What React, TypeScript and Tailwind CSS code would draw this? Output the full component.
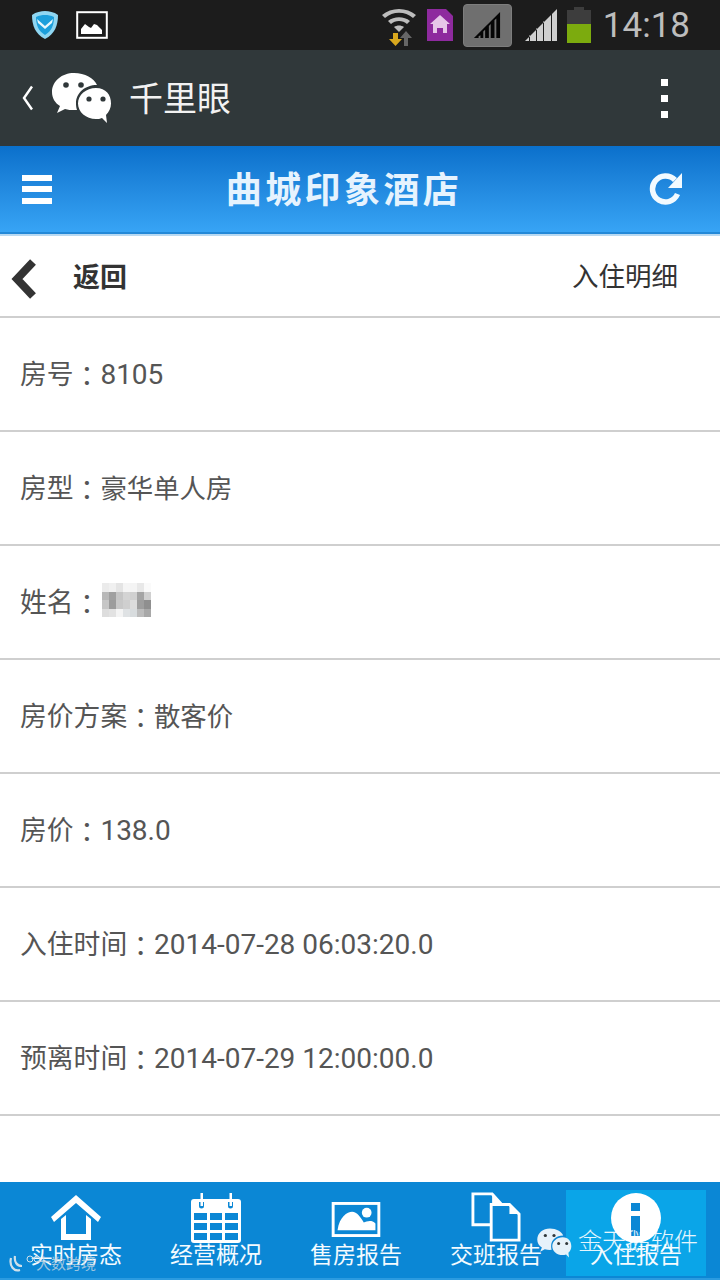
import React from "react";

const font = { fontFamily: '"Roboto","Noto Sans CJK SC",sans-serif' };
const colonFont = { fontFamily: '"Noto Sans CJK TC",sans-serif' };

function WeChat({ className }: { className?: string }) {
  return (
    <svg viewBox="0 0 60 52" className={className}>
      <path d="M23 1C11 1 1 9 1 20c0 6 3 11 8 14l-3 7 8-4c3 1 6 1 9 1 1 0 2 0 3-.1C25 35 25 33 25 31c0-10 9-18 21-18-3-7-12-12-23-12z" fill="currentColor" />
      <path d="M45 16c-10 0-18 7-18 15.500S35 47 45 47c2 0 4 0 6-1l5 5-1-8c3-3 5-7 5-11.500C60 23 55 16 45 16z" fill="currentColor" />
      <circle cx="15" cy="13" r="2.800" fill="#30383a" />
      <circle cx="30" cy="13" r="2.800" fill="#30383a" />
      <circle cx="38" cy="27" r="2.600" fill="#30383a" />
      <circle cx="52" cy="27" r="2.600" fill="#30383a" />
    </svg>
  );
}

function StatusBar() {
  return (
    <div className="h-[50px] bg-[#1c1c1c] flex items-center pl-[31px] pr-[30px]">
      <svg viewBox="0 0 28 30" className="w-[28px] h-[30px]">
        <path d="M14 1c4 0 9 1 13 4 0 10-3 19-13 24C4 24 1 15 1 5c4-3 9-4 13-4z" fill="#8fd6f2" />
        <path d="M14 5c3 0 6 .5 9 2 0 7-2 14-9 18C7 21 5 14 5 7c3-1.500 6-2 9-2z" fill="#1b9fdc" />
        <path d="M6 9l8 7 8-7-1 4-7 6-7-6z" fill="#e6f7fd" />
      </svg>
      <svg viewBox="0 0 32 28" className="w-[32px] h-[28px] ml-[17px]">
        <rect x="1.200" y="1.200" width="29.600" height="25.600" fill="none" stroke="#fff" strokeWidth="2" />
        <path d="M5 23v-5l4-5 4 3 2 1 3-4 3 1 3 3 2 2v4z" fill="#fff" />
      </svg>
      <div className="flex-1" />
      <svg viewBox="0 0 36 40" className="w-[36px] h-[40px] mt-[1px]">
        <path d="M1 9C10 1 26 1 35 9l-3 3C24 5 12 5 4 12z" fill="#bdbdbd" />
        <path d="M7 15c6-5 16-5 22 0l-3 3c-4-4-12-4-16 0z" fill="#bdbdbd" />
        <path d="M13 21c3-2 7-2 10 0l-5 5z" fill="#bdbdbd" />
        <path d="M12 27h5v6h4l-6.500 7L8 33h4z" fill="#d9a81e" />
        <path d="M25 25l6 7h-4v8h-4v-8h-4z" fill="#666" />
      </svg>
      <svg viewBox="0 0 28 34" className="w-[28px] h-[34px] ml-[9px]">
        <path d="M1 1h19l7 7v25H1z" fill="#8e2a9e" />
        <path d="M14 7l10 9h-3v9h-4v-5h-6v5H7v-9H4z" fill="#e6c6e8" />
      </svg>
      <div className="w-[49px] h-[43px] ml-[9px] rounded-[4px] bg-[#6f6f6f] border border-[#7d7d7d] flex items-center justify-center">
        <svg viewBox="0 0 30 30" className="w-[30px] h-[28px]">
          <path d="M1 29L29 1v28h-4V8l-2 2v19h-4V14l-2 2v13h-4V20l-2 2v7H8v-3l-2 1v2z" fill="#050505" />
        </svg>
      </div>
      <svg viewBox="0 0 34 34" className="w-[34px] h-[34px] ml-[12px]">
        <path d="M1 33L33 1v32h-5V6l-1 1v26h-7V13l-1 1v19h-6V20l-1 1v12H6v-6l-1 1v5z" fill="#cfcfcf" />
      </svg>
      <div className="w-[24px] h-[36px] ml-[9px] flex flex-col items-center">
        <div className="w-[10px] h-[3px] bg-[#3d3d3d]" />
        <div className="w-full h-[14px] bg-[#3d3d3d]" />
        <div className="w-full h-[19px] bg-[#7cab0e]" />
      </div>
      <span className="ml-[12px] text-[35px] leading-none text-[#bdbdbd]" style={font}>14:18</span>
    </div>
  );
}

function AppBar() {
  return (
    <div className="h-[96px] bg-[#30383a] flex items-center pl-[22px] pr-[52px] text-white">
      <svg viewBox="0 0 12 26" className="w-[12px] h-[26px]">
        <path d="M10 1.500L2 13l8 11.500" fill="none" stroke="#fff" strokeWidth="2.400" />
      </svg>
      <WeChat className="w-[60px] h-[52px] ml-[17px] text-white" />
      <span className="ml-[18px] mt-[2px] text-[34px] leading-none text-[#f2f2f2]" style={font}>千里眼</span>
      <div className="flex-1" />
      <div className="flex flex-col gap-[9px]">
        <div className="w-[7px] h-[7px] bg-white" />
        <div className="w-[7px] h-[7px] bg-white" />
        <div className="w-[7px] h-[7px] bg-white" />
      </div>
    </div>
  );
}

function Header() {
  return (
    <div className="h-[88px] bg-gradient-to-b from-[#0a70cb] to-[#37a4f5] border-b-2 border-[#2389d8] flex items-center justify-between pl-[22px] pr-[37px]">
      <div className="flex flex-col gap-[5.500px] w-[30px]">
        <div className="h-[6px] bg-white" />
        <div className="h-[6px] bg-white" />
        <div className="h-[6px] bg-white" />
      </div>
      <span className="text-[36px] font-bold leading-none mt-[3px] text-[#e6f3fe] tracking-[3.400px] mr-[13px]" style={font}>曲城印象酒店</span>
      <svg viewBox="0 0 34 34" className="w-[34px] h-[34px]">
        <path d="M28.500 22A13 13 0 1 1 26 8" fill="none" stroke="#f2faff" strokeWidth="5.500" />
        <path d="M33 1v15H19z" fill="#f2faff" />
      </svg>
    </div>
  );
}

function BackRow() {
  return (
    <div className="h-[84px] pt-[5px] border-t-[2px] border-b-2 border-t-[#b8d9f2] border-b-[#cfcfcf] bg-white flex items-center pl-[11px] pr-[42px]">
      <svg viewBox="0 0 28 40" className="w-[28px] h-[40px]">
        <path d="M22 3L6 20l16 17" fill="none" stroke="#333" strokeWidth="8" />
      </svg>
      <span className="ml-[34px] text-[27px] font-bold leading-none text-[#333]" style={font}>返回</span>
      <div className="flex-1" />
      <span className="text-[26.500px] leading-none text-[#333] -mt-[2px]" style={font}>入住明细</span>
    </div>
  );
}

function Row({ label, value, children }: { label: string; value?: string; children?: React.ReactNode }) {
  return (
    <div className="h-[114px] pt-[2px] border-b-2 border-[#cfcfcf] pl-[20px] flex items-center text-[26.800px] leading-none text-[#555]" style={font}>
      <span>{label}</span>
      <span style={colonFont}>：</span>
      {value ? <span className={/[0-9]/.test(value) ? "text-[28px]" : "text-[26.400px]"}>{value}</span> : null}
      {children}
    </div>
  );
}

const pixels = [
  "#ebebeb", "#f0f0f0", "#e4e4e4", "#f5f5f5", "#f4f4f4", "#e8e8e8", "#fafafa",
  "#b8b8b8", "#a0a0a0", "#c6c6c6", "#d4d4d4", "#d0d0d0", "#a4a4a4", "#d0d0d0",
  "#c6c6c6", "#9c9c9c", "#c8c8c8", "#cfcfcf", "#dcdcdc", "#9e9e9e", "#8f8f8f",
  "#dddddd", "#e2e2e2", "#f4f4f4", "#dfe2e4", "#d8dcde", "#bcbcbc", "#a8a8a8",
];

function Blur() {
  return (
    <div className="inline-grid grid-cols-[repeat(7,7px)] auto-rows-[8.500px] ml-[2px] -translate-y-[3px]">
      {pixels.map((c, i) => (
        <div key={i} style={{ backgroundColor: c }} />
      ))}
    </div>
  );
}

const navIcon = "h-[50px] flex items-end justify-center";

function Tab({ icon, label, active }: { icon: React.ReactNode; label: string; active?: boolean }) {
  return (
    <div className={active ? "w-[140px] h-[86px] bg-[#0aa5e8] flex flex-col items-center" : "w-[140px] h-[86px] flex flex-col items-center"}>
      <div className={navIcon}>{icon}</div>
      <span className="text-[23px] leading-none mt-[4px] text-[#f4fbff]" style={font}>{label}</span>
    </div>
  );
}

function BottomNav() {
  return (
    <div className="relative h-[98px] bg-[#0b87d5] border-b-2 border-[#2b9be0] flex items-start pt-[8px] pl-[6px] overflow-hidden">
      <Tab
        label="实时房态"
        icon={
          <svg viewBox="0 0 52 46" className="w-[52px] h-[46px]">
            <path d="M26 1L1 23l3 5L26 9l22 19 3-5z" fill="#fff" />
            <path d="M11 25v21h30V25l-5-4v19H16V21z" fill="#fff" />
          </svg>
        }
      />
      <Tab
        label="经营概况"
        icon={
          <svg viewBox="0 0 50 50" className="w-[50px] h-[50px] mb-[-3px]">
            <rect x="0" y="6" width="50" height="44" rx="3" fill="#fff" />
            <g fill="#0b87d5">
              <rect x="3" y="20" width="13" height="7" /><rect x="19" y="20" width="12" height="7" /><rect x="34" y="20" width="13" height="7" />
              <rect x="3" y="30" width="13" height="7" /><rect x="19" y="30" width="12" height="7" /><rect x="34" y="30" width="13" height="7" />
              <rect x="3" y="40" width="13" height="7" /><rect x="19" y="40" width="12" height="7" /><rect x="34" y="40" width="13" height="7" />
              <path d="M8 9h5v4a2.500 2.500 0 0 1-5 0zM37 9h5v4a2.500 2.500 0 0 1-5 0z" />
            </g>
            <rect x="9.500" y="0" width="2.500" height="13" fill="#fff" />
            <rect x="38.500" y="0" width="2.500" height="13" fill="#fff" />
          </svg>
        }
      />
      <Tab
        label="售房报告"
        icon={
          <svg viewBox="0 0 50 36" className="w-[50px] h-[35px] mb-[3px]">
            <rect x="1.500" y="1.500" width="47" height="33" fill="none" stroke="#fff" strokeWidth="3" />
            <path d="M6 29c2-14 10-19 15-19s9 6 12 11c3-1 8-3 12 1v7z" fill="#fff" />
            <circle cx="36" cy="11" r="5" fill="#fff" />
          </svg>
        }
      />
      <Tab
        label="交班报告"
        icon={
          <svg viewBox="0 0 52 52" className="w-[50px] h-[50px] mb-[-2px]">
            <path d="M2 2h20l9 10v22H2z" fill="none" stroke="#fff" strokeWidth="3" />
            <path d="M22 2v10h9z" fill="#fff" />
            <path d="M21 13h19l10 10v27H21z" fill="#0b87d5" stroke="#fff" strokeWidth="3" />
            <path d="M40 13v10h10z" fill="#fff" />
          </svg>
        }
      />
      <Tab
        active
        label="入住报告"
        icon={
          <svg viewBox="0 0 50 50" className="w-[50px] h-[50px] mb-[-3px]">
            <circle cx="25" cy="25" r="25" fill="#fff" />
            <rect x="20" y="10" width="9" height="8" fill="#0b87d5" />
            <rect x="20" y="23" width="9" height="20" fill="#0b87d5" />
          </svg>
        }
      />
      {/* watermarks lying over the tab bar */}
      <WeChat className="absolute left-[536px] top-[46px] w-[36px] h-[30px] text-[#e6f2fa]" />
      <span className="absolute left-[578px] top-[48px] text-[24px] leading-none text-white/90 font-light" style={font}>金天鹅软件</span>
      <svg viewBox="0 0 34 24" className="absolute left-[8px] top-[70px] w-[34px] h-[24px]" fill="none">
        <path d="M3 6c-2 8 3 14 9 12M7 4c-1 6 2 10 7 10" stroke="#cfe0ea" strokeWidth="2.200" />
        <circle cx="22" cy="7" r="3" stroke="#cfe0ea" strokeWidth="1" />
        <circle cx="29" cy="7" r="3" stroke="#cfe0ea" strokeWidth="1" />
      </svg>
      <span className="absolute left-[36px] top-[75px] text-[15px] leading-none text-[#c3d6e2]/80" style={font}>大数跨境</span>
    </div>
  );
}

export default function App() {
  return (
    <div className="w-[720px] h-[1280px] flex flex-col bg-white overflow-hidden">
      <StatusBar />
      <AppBar />
      <Header />
      <BackRow />
      <Row label="房号" value="8105" />
      <Row label="房型" value="豪华单人房" />
      <Row label="姓名"><Blur /></Row>
      <Row label="房价方案" value="散客价" />
      <Row label="房价" value="138.0" />
      <Row label="入住时间" value="2014-07-28 06:03:20.0" />
      <Row label="预离时间" value="2014-07-29 12:00:00.0" />
      <div className="flex-1" />
      <BottomNav />
    </div>
  );
}
